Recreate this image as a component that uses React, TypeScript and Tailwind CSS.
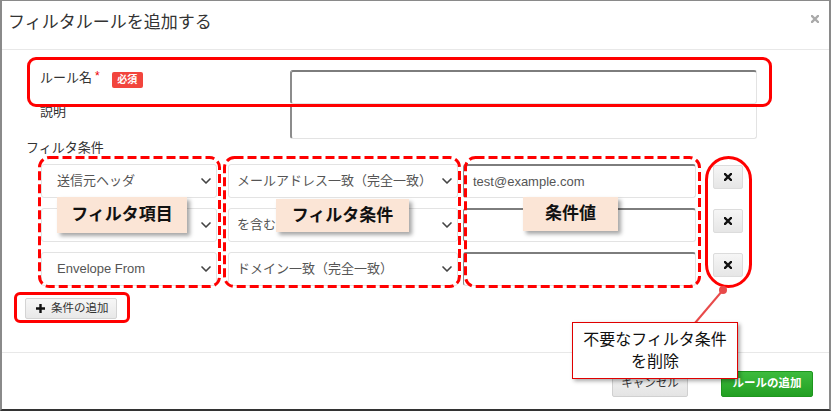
import { ChevronDown } from "lucide-react";

const FONT = "font-['Liberation_Sans','Noto_Sans_CJK_JP',sans-serif]";

type Row = { field: string; op: string; value: string };

const ROWS: Row[] = [
  { field: "送信元ヘッダ", op: "メールアドレス一致（完全一致）", value: "test@example.com" },
  { field: "", op: "を含む", value: "" },
  { field: "Envelope From", op: "ドメイン一致（完全一致）", value: "" },
];

function Chevron() {
  return <ChevronDown size={16} strokeWidth={2.5} className="shrink-0 text-[#444]" />;
}

function Cross({ className = "" }: { className?: string }) {
  return (
    <svg width="8" height="8" viewBox="0 0 8 8" className={className}>
      <path d="M1 1 7 7M7 1 1 7" stroke="currentColor" strokeWidth="2.4" strokeLinecap="square" />
    </svg>
  );
}

function FilterRow({ row }: { row: Row }) {
  return (
    <div className="flex items-start">
      <div className="flex h-[34px] w-[176px] items-center justify-between rounded-[3px] border border-[#e3e3e3] bg-white pl-[15px] pr-[2px] text-[13px] text-[#555]">
        <span>{row.field}</span>
        <Chevron />
      </div>
      <div className="ml-[11px] flex h-[34px] w-[230px] items-center justify-between rounded-[3px] border border-[#e3e3e3] bg-white pl-[8px] pr-[2px] text-[13px] text-[#555]">
        <span className="whitespace-nowrap">{row.op}</span>
        <Chevron />
      </div>
      <div className="ml-[5px] flex h-[34px] w-[233px] items-center rounded-[3px] border border-[#e3e3e3] border-t-2 border-l-[#8a8a8a] border-t-[#7d7d7d] bg-white pl-[9px] text-[13px] text-[#555]">
        {row.value}
      </div>
      <button
        type="button"
        className="ml-[17px] mt-[1px] flex h-[24px] w-[30px] items-center justify-center rounded-[2px] border border-[#dcdcdc] bg-gradient-to-b from-[#f6f6f6] to-[#e6e6e6] text-[#111]"
      >
        <Cross />
      </button>
    </div>
  );
}

function Tag({ children, className }: { children: string; className: string }) {
  return (
    <div
      className={`absolute flex items-center justify-center bg-[#fbe5d6] text-[17px] font-bold text-[#111] shadow-[3px_3px_4px_rgba(0,0,0,0.35)] ${className}`}
    >
      {children}
    </div>
  );
}

export default function App() {
  return (
    <div className={`relative h-[413px] w-[833px] overflow-hidden bg-white ${FONT}`}>
      <div className="flex h-[411px] w-[831px] flex-col border-b-2 border-l-2 border-r-2 border-t border-[#8a8a8a] border-b-[#333]">
        {/* header */}
        <div className="flex h-[49px] shrink-0 items-center justify-between border-b border-[#e8e8e8] pb-[4px] pl-[6px] pr-[10px]">
          <h1 className="text-[17px] leading-[20px] text-[#333]">フィルタルールを追加する</h1>
          <Cross className="mt-[-8px] text-[#aaa]" />
        </div>

        {/* body */}
        <div className="h-[302px] shrink-0 pl-[24px] pt-[20px] text-[13px] text-[#333]">
          <div className="ml-[14px] grid grid-cols-[250px_467px]">
            <div className="flex items-start leading-[16px]">
              <span>ルール名</span>
              <span className="ml-[3px] text-[12px] leading-[12px] text-[#e00]">*</span>
              <span className="ml-[12px] mt-[2px] flex h-[16px] w-[31px] items-center justify-center rounded-[2px] bg-[#f2453d] text-[10px] font-bold text-white">
                必須
              </span>
            </div>
            <div className="h-[34px] rounded-[3px] border-2 border-[#8c8c8c] border-b border-r border-b-[#e3e3e3] border-r-[#e3e3e3] border-t-[#7d7d7d] bg-white" />
            <div className="leading-[16px]">説明</div>
            <div className="h-[35px] rounded-[3px] border-2 border-[#8c8c8c] border-b border-r border-b-[#e3e3e3] border-r-[#e3e3e3] border-t-[#7d7d7d] bg-white" />
          </div>

          <div className="mt-[1px] leading-[16px]">フィルタ条件</div>

          <div className="ml-[15px] mt-[8px] flex flex-col gap-[10px]">
            {ROWS.map((r, i) => (
              <FilterRow key={i} row={r} />
            ))}
          </div>

          <button
            type="button"
            className="-ml-[1px] mt-[12px] flex h-[21px] w-[92px] items-center gap-[6px] rounded-[2px] border border-[#d4d4d4] bg-gradient-to-b from-[#f7f7f7] to-[#e8e8e8] pl-[10px] text-[11.5px] text-[#333]"
          >
            <svg width="9" height="9" viewBox="0 0 9 9">
              <path d="M4.5 0v9M0 4.5h9" stroke="#111" strokeWidth="2.4" />
            </svg>
            条件の追加
          </button>
        </div>

        {/* footer */}
        <div className="flex flex-1 items-start justify-end gap-[33px] border-t border-[#e8e8e8] pr-[16px] pt-[18px]">
          <button
            type="button"
            className="h-[26px] w-[76px] rounded-[2px] border border-[#d0d0d0] bg-gradient-to-b from-[#f4f4f4] to-[#e4e4e4] text-[11.5px] text-[#333]"
          >
            キャンセル
          </button>
          <button
            type="button"
            className="h-[26px] w-[92px] rounded-[2px] border border-[#1e961e] bg-gradient-to-b from-[#3dbb3d] to-[#22a022] text-[11.5px] font-bold text-white"
          >
            ルールの追加
          </button>
        </div>
      </div>

      {/* annotations */}
      <div className="absolute left-[27px] top-[57px] h-[50px] w-[745px] rounded-[9px] border-[3px] border-[#ff0000]" />
      <div className="absolute left-[14px] top-[292px] h-[31px] w-[116px] rounded-[6px] border-[3px] border-[#ff0000]" />
      <div className="absolute left-[705px] top-[156px] h-[132px] w-[47px] rounded-full border-[3px] border-[#ff0000]" />

      <svg className="pointer-events-none absolute left-0 top-0" width="833" height="413">
        <g fill="none" stroke="#ff0000" strokeWidth="3" strokeDasharray="9 4">
          <rect x="39.5" y="157.5" width="180" height="129" rx="10" />
          <rect x="224.5" y="157.5" width="235" height="129" rx="10" />
          <rect x="465.5" y="157.5" width="234" height="129" rx="10" />
        </g>
        <line x1="723" y1="290" x2="695" y2="323" stroke="#e84a4a" strokeWidth="2" />
        <circle cx="723" cy="290" r="4" fill="#e84a4a" />
      </svg>

      <Tag className="left-[57px] top-[197px] h-[36px] w-[130px]">フィルタ項目</Tag>
      <Tag className="left-[276px] top-[199px] h-[33px] w-[133px]">フィルタ条件</Tag>
      <Tag className="left-[523px] top-[197px] h-[34px] w-[95px]">条件値</Tag>

      <div className="absolute left-[572px] top-[322px] flex h-[57px] w-[166px] flex-col items-center justify-center border border-[#e00000] bg-white text-[16px] leading-[22px] text-[#111] shadow-[2px_2px_4px_rgba(0,0,0,0.35)]">
        <span>不要なフィルタ条件</span>
        <span>を削除</span>
      </div>
    </div>
  );
}
